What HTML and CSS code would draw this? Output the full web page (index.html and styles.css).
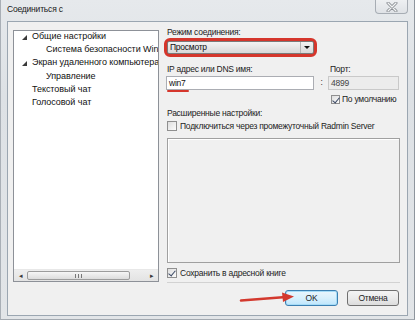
FILE: index.html
```html
<!DOCTYPE html>
<html lang="ru">
  <head>
  <meta charset="utf-8">
  <link rel="stylesheet" href="styles.css">
  </head>
  <body>
    <div class="window">
      <div class="titlebar">
        <span class="title">Соединиться с</span>
        <span class="close">
          <svg width="14" height="10" viewBox="0 0 14 10">
            <path d="M3 1 L11 9 M11 1 L3 9" stroke="#8b8f95" stroke-width="3" stroke-linecap="round"/>
            <path d="M3 1 L11 9 M11 1 L3 9" stroke="#f4f5f6" stroke-width="1.2" stroke-linecap="round"/>
          </svg>
        </span>
      </div>

      <div class="client">
        <div class="main">
          <div class="tree">
            <ul class="tree-list">
              <li class="node"><span class="twisty"></span>Общие настройки</li>
              <li class="child">Система безопасности Windows</li>
              <li class="node"><span class="twisty"></span>Экран удаленного компьютера</li>
              <li class="child">Управление</li>
              <li class="leaf">Текстовый чат</li>
              <li class="leaf">Голосовой чат</li>
            </ul>
            <div class="hscroll">
              <span class="sb-arrow">&#9666;</span>
              <span class="sb-thumb"><span class="grip"></span></span>
              <span class="sb-track"></span>
              <span class="sb-arrow">&#9656;</span>
            </div>
          </div>

          <div class="settings">
            <div class="lbl">Режим соединения:</div>
            <div class="ring">
              <div class="combo">
                <span class="combo-text">Просмотр</span>
                <span class="combo-btn"></span>
              </div>
            </div>

            <div class="grid lbl-row">
              <span class="lbl">IP адрес или DNS имя:</span>
              <span></span>
              <span class="lbl port-lbl">Порт:</span>
            </div>
            <div class="grid input-row">
              <span class="field">win7<span class="underline"></span></span>
              <span class="colon">:</span>
              <span class="field disabled">4899</span>
            </div>
            <div class="grid check-row">
              <span></span>
              <span></span>
              <label class="check small"><span class="box checked"></span>По умолчанию</label>
            </div>

            <div class="lbl adv">Расширенные настройки:</div>
            <label class="check radmin"><span class="box"></span>Подключиться через промежуточный Radmin Server</label>

            <div class="panel"></div>

            <label class="check save"><span class="box checked"></span>Сохранить в адресной книге</label>
            <div class="sep"></div>
          </div>
        </div>

        <div class="buttons">
          <button class="btn default">OK</button>
          <button class="btn">Отмена</button>
        </div>
      </div>

      <svg class="pointer" width="60" height="16" viewBox="0 0 60 16">
        <path d="M4 10.5 L49 7" stroke="#d3392e" stroke-width="2.6" stroke-linecap="round"/>
        <polygon points="45,2.5 57,6.5 46,12" fill="#d3392e"/>
      </svg>
    </div>
  </body>
</html>
```

FILE: styles.css
```css
html, body { margin: 0; padding: 0; }
body {
  width: 415px; height: 320px; overflow: hidden; background: #dfe3e7;
  font: 9px/11px "Liberation Sans", Arial, sans-serif; color: #1c1c1c;
}
ul { margin: 0; padding: 0; list-style: none; }
button { font: inherit; color: inherit; letter-spacing: inherit; }

.window {
  position: relative; width: 415px; height: 320px; box-sizing: border-box;
  display: flex; flex-direction: column;
  padding: 0 6px 3px 6px;
  background: linear-gradient(#e6e9ec, #dde1e5 30%, #e2e5e8);
  border-left: 1px solid #a9afb6; border-right: 1px solid #8e959d; border-bottom: 1px solid #a3a9b0;
}

.titlebar { height: 21px; display: flex; justify-content: space-between; align-items: flex-start; }
.title { padding-top: 4px; color: #1a1a1a; font-size: 8.5px; letter-spacing: -0.2px; }
.close {
  width: 33px; height: 14px; box-sizing: border-box;
  display: flex; align-items: center; justify-content: center;
  border: 1px solid #a7adb4; border-top: none; border-radius: 0 0 4px 4px;
  background: linear-gradient(#eef0f2, #dfe2e6);
}

.client {
  flex: 1; display: flex; flex-direction: column;
  background: #f0f0f0; border: 1px solid #9ba6b1;
}
.main { display: flex; padding: 5px 6px 0 5px; }

/* left tree */
.tree {
  width: 146px; height: 252px; margin-top: 3px; box-sizing: border-box;
  display: flex; flex-direction: column; justify-content: space-between;
  background: #fff; border: 1px solid #8d9198; overflow: hidden;
}
.tree-list { margin-top: -1px; line-height: 13.2px; white-space: nowrap; color: #111; letter-spacing: -0.05px; }
.tree-list li { display: flex; align-items: center; }
.tree-list .node { padding-left: 8px; }
.tree-list .child { padding-left: 32px; }
.tree-list .leaf { padding-left: 18px; }
.twisty {
  flex: none; width: 0; height: 0; margin: 1px 5px 0 0;
  border-left: 5px solid transparent; border-bottom: 5px solid #3a3a3a;
}
.hscroll {
  height: 11px; display: flex; align-items: center;
  background: linear-gradient(#eeeeee, #e3e3e3); border-top: 1px solid #e8e8e8;
  font-size: 7px; color: #3a3a3a;
}
.sb-arrow { width: 13px; text-align: center; }
.sb-thumb {
  width: 103px; height: 9px; box-sizing: border-box;
  display: flex; align-items: center; justify-content: center;
  border: 1px solid #9c9c9c; border-radius: 2px;
  background: linear-gradient(#f6f6f6, #dcdcdc);
}
.grip { width: 5px; height: 4px; border-left: 1px solid #777; border-right: 1px solid #777; }
.grip::after { content: ""; display: block; width: 1px; height: 4px; margin-left: 2px; background: #777; }
.sb-track { flex: 1; }

/* right column */
.settings {
  flex: 1; margin-left: 8px; display: flex; flex-direction: column;
  white-space: nowrap; font-size: 8.5px; letter-spacing: -0.25px;
}
.lbl { height: 11px; color: #222; }

.ring {
  width: 153px; margin-left: -3px; box-sizing: border-box;
  border: 3px solid #d5362c; border-radius: 6px; background: #d5362c;
}
.combo {
  height: 13px; display: flex; box-sizing: border-box;
  border: 1px solid #7a7a7a; border-radius: 2px;
  background: linear-gradient(#f3f3f3, #e6e6e6 50%, #d9d9d9);
}
.combo-text { flex: 1; padding-left: 2px; line-height: 11px; color: #111; }
.combo-btn {
  width: 12px; border-left: 1px solid #b5b5b5;
  display: flex; align-items: center; justify-content: center;
}
.combo-btn::after {
  content: ""; width: 0; height: 0;
  border-left: 3px solid transparent; border-right: 3px solid transparent; border-top: 3px solid #111;
}

.grid { display: grid; grid-template-columns: 147px 14px 71px; }
.lbl-row { margin-top: 7px; }
.port-lbl { padding-left: 2px; }
.input-row { margin-top: 1px; height: 14px; }
.field {
  position: relative; height: 14px; box-sizing: border-box;
  padding-left: 2px; line-height: 12px;
  background: #fff; border: 1px solid #abadb3; color: #111;
}
.input-row .field:first-child { margin-left: -1px; }
.field.disabled { background: #ececec; border-color: #c9c9c9; color: #444; }
.underline {
  position: absolute; left: 0; bottom: -3px; width: 22px; height: 2px;
  border-radius: 1px; background: #d5362c;
}
.colon { text-align: center; padding-left: 1px; line-height: 12px; color: #333; }

.check { display: flex; align-items: center; height: 12px; color: #1c1c1c; }
.box {
  flex: none; width: 10px; height: 10px; box-sizing: border-box; margin-right: 3px;
  border: 1px solid #8f8f8f; background: linear-gradient(135deg, #dedede, #fbfbfb);
  position: relative;
}
.box.checked::after {
  content: ""; position: absolute; left: 2px; top: 0;
  width: 3px; height: 6px;
  border: solid #3b4a66; border-width: 0 1.5px 1.5px 0; transform: rotate(40deg);
}
.check-row { margin-top: 3px; }
.check.small { padding-left: 3px; }
.check.small .box { width: 9px; height: 9px; margin-right: 2px; }
.adv { margin-top: 3px; }
.radmin { margin-top: 1px; }
.panel {
  margin-top: 6px; width: 233px; height: 125px; box-sizing: border-box;
  border: 1px solid #a0a0a0; box-shadow: inset 1px 1px 0 #fff; background: #f0f0f0;
}
.save { margin-top: 4px; }
.sep { margin-top: 3px; width: 233px; height: 1px; background: #d2d2d2; }

.buttons {
  display: flex; justify-content: flex-end; gap: 9px; padding: 7px 8px 0 0;
  font-size: 8.5px; letter-spacing: -0.25px;
}
.btn {
  width: 52px; height: 16px; padding: 0; box-sizing: border-box; cursor: pointer;
  border: 1px solid #707070; border-radius: 3px;
  background: linear-gradient(#f4f4f4, #ebebeb 50%, #dcdcdc);
}
.btn.default {
  width: 53px; border-color: #3c7fb1;
  background: linear-gradient(#eaf6fd, #d9f0fc 50%, #bee6fd);
  box-shadow: inset 0 0 0 1px #a6dcf7;
}

/* annotation arrow drawn over the dialog */
.pointer { position: absolute; left: 236px; top: 290px; }
```
